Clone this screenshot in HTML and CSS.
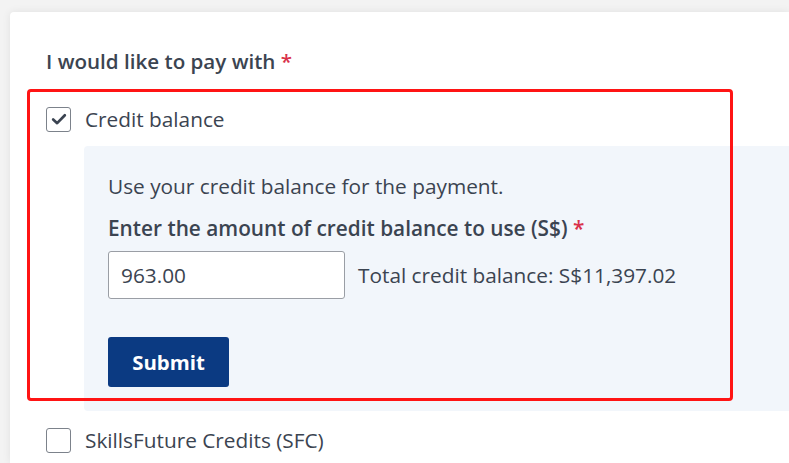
FILE: index.html
```html
<!DOCTYPE html>
<html lang="en">
<head>
<meta charset="utf-8">
<title>Payment</title>
<link rel="stylesheet" href="styles.css">
</head>
<body>
<div class="card">
  <div class="heading">I would like to pay with <span class="req">*</span></div>
  <label class="option">
    <span class="box checked">
      <svg viewBox="0 0 24 24" width="20" height="20"><path d="M5 12.5 L9.8 17 L19 7.5" fill="none" stroke="#3b4451" stroke-width="3.2" stroke-linecap="round" stroke-linejoin="round"/></svg>
    </span>
    <span class="option-text">Credit balance</span>
  </label>
  <div class="panel">
    <p class="hint">Use your credit balance for the payment.</p>
    <div class="field-label">Enter the amount of credit balance to use (S$) <span class="req">*</span></div>
    <div class="field-row">
      <div class="input">963.00</div>
      <span class="total">Total credit balance: S$11,397.02</span>
    </div>
    <button class="submit">Submit</button>
  </div>
  <label class="option second">
    <span class="box"></span>
    <span class="option-text">SkillsFuture Credits (SFC)</span>
  </label>
</div>
<div class="highlight"></div>
</body>
</html>
```

FILE: styles.css
```css
html, body {
  margin: 0;
  padding: 0;
}
body {
  background: #f3f3f3;
  font-family: "Open Sans", "Noto Sans", sans-serif;
  color: #3b4451;
  overflow: hidden;
  height: 463px;
  position: relative;
}
.card {
  margin: 12px 0 0 10px;
  width: 779px;
  height: 451px;
  background: #fff;
  box-shadow: 0 0 8px rgba(0,0,0,0.08);
  border-radius: 4px 0 0 0;
  padding: 37px 0 0 36px;
  box-sizing: border-box;
  overflow: hidden;
}
.heading {
  font-size: 20.6px;
  font-weight: 600;
  line-height: 24px;
}
.req {
  color: #d9314a;
}
.option {
  display: flex;
  align-items: center;
  gap: 14px;
  height: 26px;
  margin-top: 33px;
  font-size: 20.8px;
}
.box {
  width: 25px;
  height: 25px;
  box-sizing: border-box;
  border: 1.5px solid #7c828b;
  border-radius: 3px;
  display: flex;
  align-items: center;
  justify-content: center;
  background: #fff;
}
.option-text {
  line-height: 26px;
}
.panel {
  margin: 14px 0 0 38px;
  background: #f2f6fb;
  border-radius: 4px 0 0 4px;
  padding: 28px 24px 24px;
  height: 265px;
  box-sizing: border-box;
}
.hint {
  margin: 0;
  font-size: 20.8px;
  line-height: 24px;
}
.field-label {
  margin-top: 18px;
  font-size: 20.8px;
  font-weight: 600;
  line-height: 24px;
}
.field-row {
  display: flex;
  align-items: center;
  gap: 13px;
  margin-top: 11px;
}
.input {
  width: 237px;
  height: 48px;
  box-sizing: border-box;
  border: 1px solid #9a9ea5;
  border-radius: 3px;
  background: #fff;
  font-size: 20.8px;
  padding-left: 12px;
  display: flex;
  align-items: center;
}
.total {
  font-size: 20.8px;
}
.submit {
  display: block;
  margin-top: 38px;
  width: 121px;
  height: 50px;
  border: none;
  border-radius: 3px;
  background: #0b3a82;
  color: #fff;
  font-family: "Open Sans", "Noto Sans", sans-serif;
  font-size: 20.4px;
  font-weight: 700;
}
.option.second {
  margin-top: 16px;
}
.highlight {
  position: absolute;
  left: 27px;
  top: 89px;
  width: 706px;
  height: 312px;
  box-sizing: border-box;
  border: 3px solid #ff1414;
  border-radius: 4px;
}
```
